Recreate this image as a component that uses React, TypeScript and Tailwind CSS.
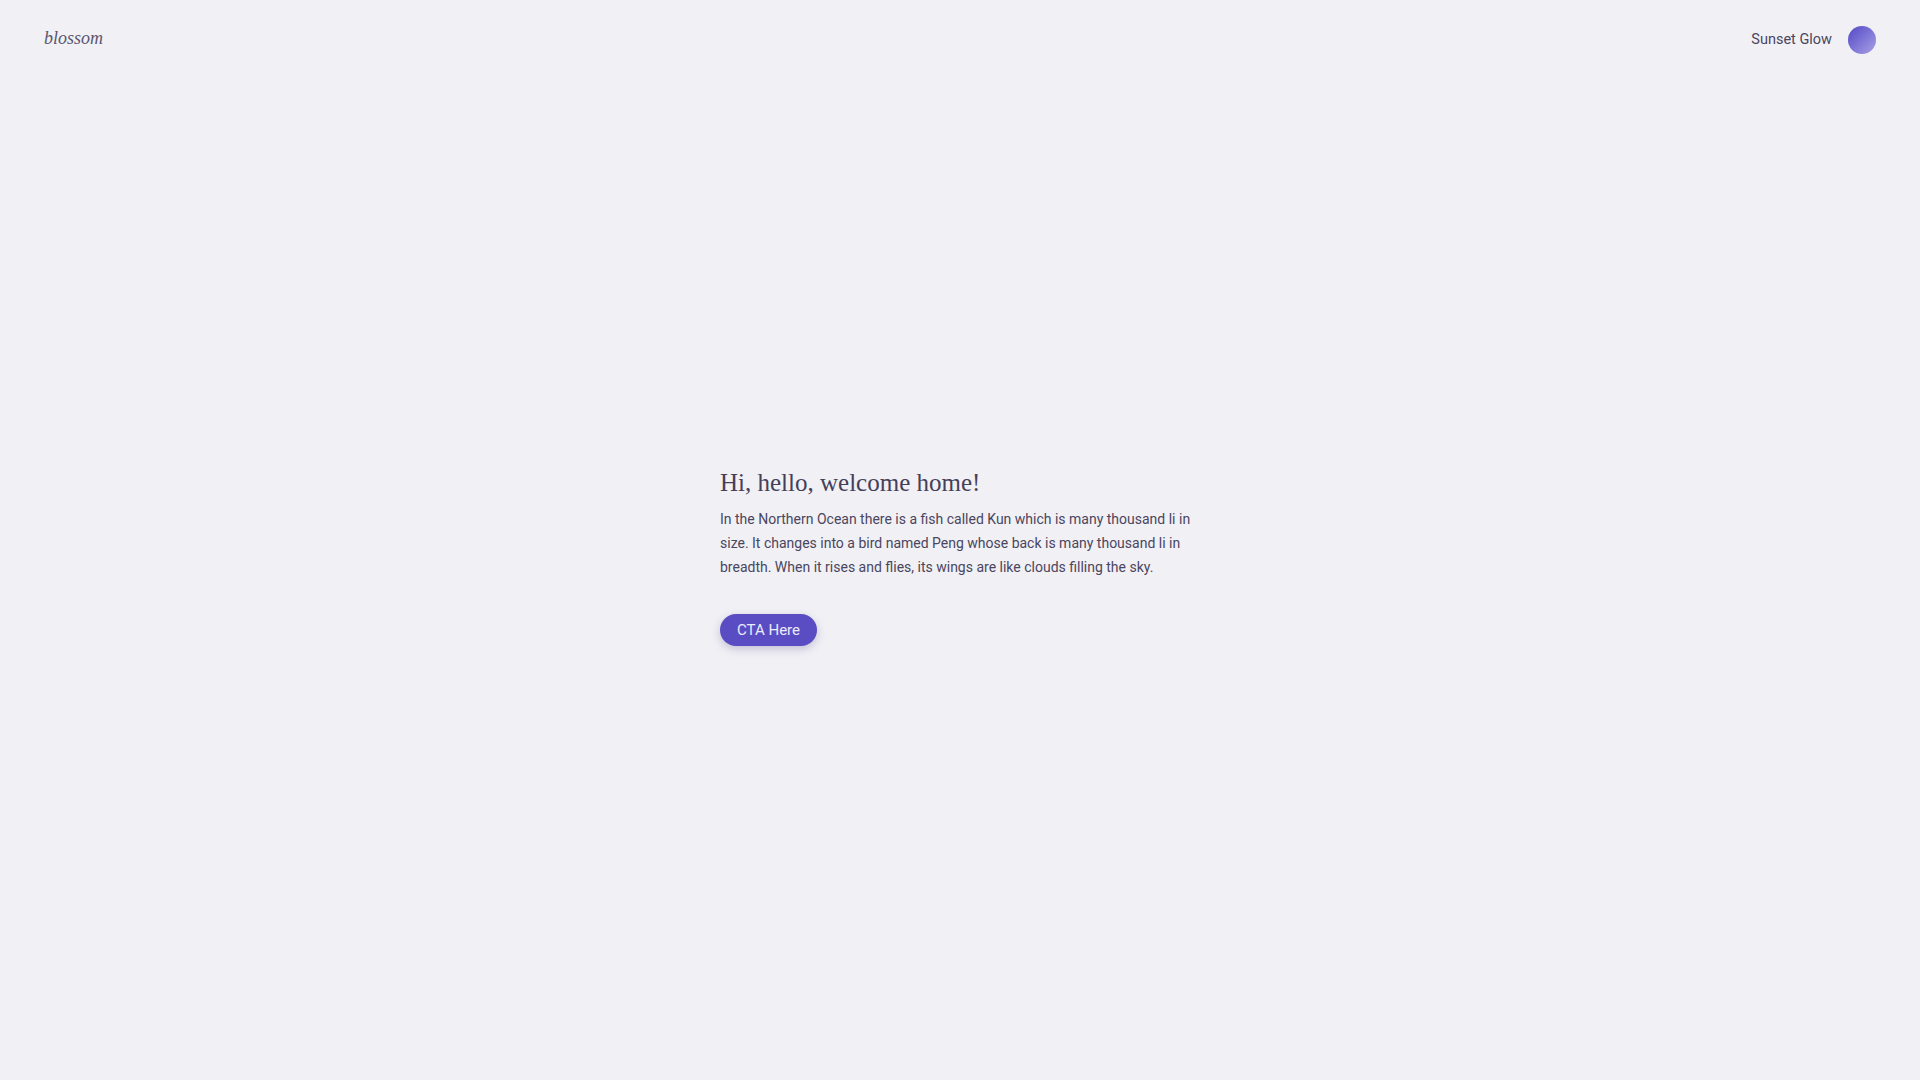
export default function App() {
  return (
    <div className="min-h-screen w-full bg-[#f1f0f5] text-[#4a4660] flex flex-col">
      <header className="flex items-center justify-between h-[80px] pl-[44px] pr-[44px]">
        <div className="italic text-[18px] text-[#5a5670] font-['Liberation_Serif',serif] -mt-[4px]">blossom</div>
        <div className="flex items-center gap-[16px]">
          <span className="text-[14.5px] font-['Roboto',sans-serif] text-[#4a4660]">Sunset Glow</span>
          <span className="w-[28px] h-[28px] rounded-full bg-gradient-to-br from-[#5546c4] to-[#ab9fe6] block" />
        </div>
      </header>
      <main className="flex-1 flex items-start justify-center">
        <div className="w-[480px] mt-[387px]">
          <h1 className="text-[25px] font-['Liberation_Serif',serif] text-[#45405a] leading-[32px]">Hi, hello, welcome home!</h1>
          <p className="mt-[8px] text-[14px] leading-[24px] font-['Roboto',sans-serif] text-[#4a4660]">
            In the Northern Ocean there is a fish called Kun which is many thousand li in size. It changes into a bird named Peng whose back is many thousand li in breadth. When it rises and flies, its wings are like clouds filling the sky.
          </p>
          <button className="mt-[35px] h-[32px] w-[97px] rounded-full bg-[#5a4dc4] text-[#ecebfa] text-[15px] font-['Roboto',sans-serif] shadow-[0_3px_8px_rgba(60,50,120,0.25)]">CTA Here</button>
        </div>
      </main>
    </div>
  );
}
